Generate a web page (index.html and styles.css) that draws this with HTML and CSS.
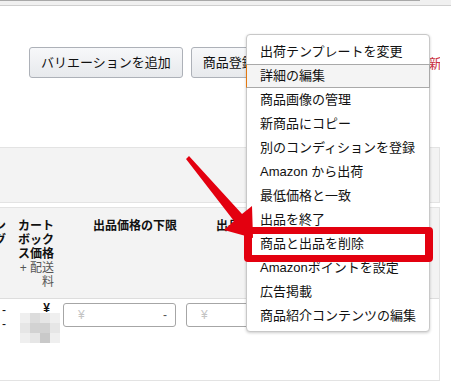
FILE: index.html
```html
<!DOCTYPE html>
<html lang="ja">
<head>
    <meta charset="UTF-8">
    <meta name="viewport" content="width=device-width, initial-scale=1.0">
    <title>在庫管理</title>
    <link rel="stylesheet" href="styles.css">
</head>
<body>
    <div class="topbar"><div class="topbar-track"></div></div>

    <div class="page">
        <div class="actions">
            <button class="btn">バリエーションを追加</button>
            <button class="btn btn-wide">商品登録を複製</button>
            <a class="new-link" href="#">新規</a>
        </div>

        <div class="filter-panel"></div>

        <div class="grid">
            <div class="grid-head">
                <div class="cell cell-edge"><span>ン</span><span>グ</span></div>
                <div class="cell h-cart">
                    カートボックス価格
                    <span class="sub">+ 配送料</span>
                </div>
                <div class="cell h-price">出品価格の下限</div>
                <div class="cell h-price">出品価格の上限</div>
            </div>
            <div class="grid-row">
                <div class="cell cell-edge"><span>-</span><span>-</span></div>
                <div class="cell r-cart">
                    <div class="yen">¥</div>
                    <div class="thumb">
                        <i class="p1"></i><i class="p3"></i><i class="p2"></i><i class="p1"></i>
                        <i class="p2"></i><i class="p4"></i><i class="p4"></i><i class="p2"></i>
                        <i class="p1"></i><i class="p2"></i><i class="p5"></i><i class="p1"></i>
                    </div>
                </div>
                <div class="cell">
                    <div class="price-input"><span class="ph">¥</span><span class="dash">-</span></div>
                </div>
                <div class="cell">
                    <div class="price-input wide"><span class="ph">¥</span><span class="dash">-</span></div>
                </div>
            </div>
        </div>
    </div>

    <ul class="menu">
        <li>出荷テンプレートを変更</li>
        <li class="active">詳細の編集</li>
        <li>商品画像の管理</li>
        <li>新商品にコピー</li>
        <li>別のコンディションを登録</li>
        <li>Amazon から出荷</li>
        <li>最低価格と一致</li>
        <li>出品を終了</li>
        <li>商品と出品を削除</li>
        <li>Amazonポイントを設定</li>
        <li>広告掲載</li>
        <li>商品紹介コンテンツの編集</li>
    </ul>

    <!-- 注釈の矢印と枠 -->
    <svg class="arrow" width="451" height="384" viewBox="0 0 451 384">
        <polygon points="189,156 242,214 252,206 253,238 224,230 234,221 186,159" fill="#e3000f"/>
    </svg>
    <div class="callout"></div>
</body>
</html>
```

FILE: styles.css
```css
body {
    margin: 0;
    font-family: "Liberation Sans", "Noto Sans CJK JP", sans-serif;
    color: #111;
    background-color: #fff;
    overflow: hidden;
}
.topbar {
    height: 5px;
    background-color: #f0f0f0;
    border-bottom: 1px solid #cfcfcf;
}
.topbar-track {
    width: 420px;
    height: 1px;
    background-color: #a8a8a8;
}

.page {
    width: 440px;
}
.actions {
    display: flex;
    align-items: center;
    padding: 41px 0 0 29px;
    overflow: hidden;
    white-space: nowrap;
}
.btn {
    flex: none;
    height: 31px;
    margin: 0 8px 0 0;
    padding: 0 11px;
    border: 1px solid #adb1b8;
    border-radius: 3px;
    background: linear-gradient(#f7f8fa, #e7e9ec);
    font-family: inherit;
    font-size: 13px;
    line-height: 29px;
    color: #111;
    text-align: left;
}
.btn-wide {
    width: 230px;
}
.new-link {
    flex: none;
    font-size: 13px;
    color: #cc3344;
    text-decoration: none;
}

.filter-panel {
    margin-top: 69px;
    height: 54px;
    background-color: #f3f3f3;
    border: 1px solid #e3e3e3;
    border-left: none;
}

.grid {
    margin-top: 4px;
    border: 1px solid #e3e3e3;
    border-left: none;
}
.grid-head,
.grid-row {
    display: grid;
    grid-template-columns: 16px 47px 123px 1fr;
    font-size: 12px;
    line-height: 14px;
}
.grid-head {
    padding: 11px 0 9px;
    background-color: #f3f3f3;
    border-bottom: 1px solid #ddd;
    font-weight: bold;
}
.grid-row {
    height: 77px;
    padding-top: 4px;
}
.cell-edge {
    display: flex;
    flex-direction: column;
    align-items: flex-end;
    padding-right: 10px;
}
.h-cart {
    padding: 0 9px 0 2px;
}
.h-cart .sub {
    display: block;
    text-align: right;
    font-weight: normal;
    color: #555;
}
.h-price {
    padding-left: 30px;
    white-space: nowrap;
}

.r-cart .yen {
    padding-right: 13px;
    text-align: right;
    font-weight: bold;
    line-height: 10px;
}
.thumb {
    display: grid;
    grid-template-columns: repeat(4, 10px);
    grid-auto-rows: 10px;
    margin: 0 0 0 4px;
}
.thumb i { display: block; }
.thumb .p1 { background-color: #efefef; }
.thumb .p2 { background-color: #e6e6e6; }
.thumb .p3 { background-color: #dcdcdc; }
.thumb .p4 { background-color: #d2d2d2; }
.thumb .p5 { background-color: #c9c9c9; }

.price-input {
    display: flex;
    justify-content: space-between;
    align-items: center;
    box-sizing: border-box;
    width: 113px;
    height: 24px;
    padding: 0 8px 0 14px;
    border: 1px solid #a6a6a6;
    border-radius: 3px;
    font-size: 12px;
}
.price-input.wide {
    width: 160px;
}
.price-input .ph {
    color: #c4c4c4;
}
.price-input .dash {
    color: #555;
}

.menu {
    position: absolute;
    left: 246px;
    top: 34px;
    box-sizing: border-box;
    width: 184px;
    margin: 0;
    padding: 5px 0 3px;
    list-style-type: none;
    background-color: #fff;
    border: 1px solid #c8c8c8;
    border-radius: 4px;
    box-shadow: 0 1px 3px rgba(0, 0, 0, 0.2);
}
.menu li {
    height: 24px;
    padding-left: 13px;
    font-size: 13px;
    line-height: 24px;
    white-space: nowrap;
}
.menu li.active {
    box-sizing: border-box;
    margin: 0 -1px;
    line-height: 22px;
    background-color: #f4f4f4;
    border: 1px solid #a9a9a9;
    border-left-color: #e47911;
}

.arrow {
    position: absolute;
    left: 0;
    top: 0;
    pointer-events: none;
}
.callout {
    position: absolute;
    left: 244px;
    top: 227px;
    box-sizing: border-box;
    width: 189px;
    height: 35px;
    border: 7px solid #e3000f;
    border-left-width: 8px;
    border-right-width: 8px;
    border-radius: 4px;
}
```
